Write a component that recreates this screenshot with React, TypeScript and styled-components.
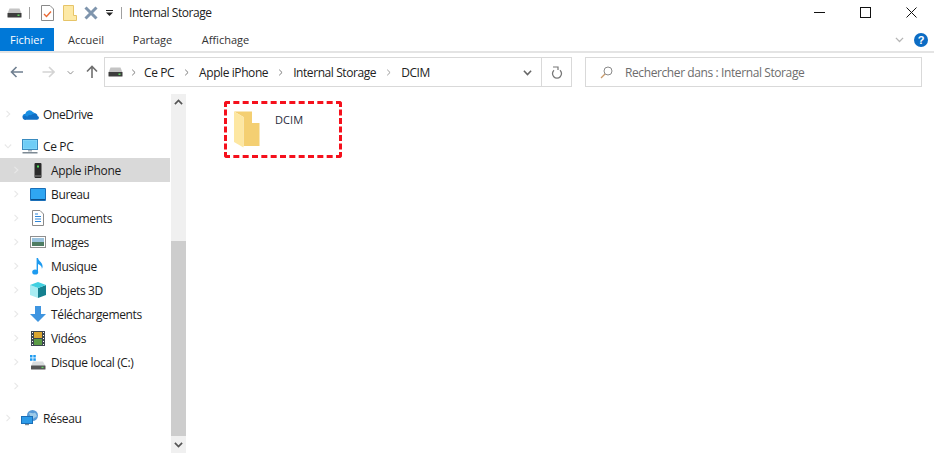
import React from 'react';
import styled, { createGlobalStyle } from 'styled-components';

const GlobalStyle = createGlobalStyle`
  html, body {
    margin: 0;
    padding: 0;
    background: #fff;
  }
  body {
    font-family: "Open Sans", "Noto Sans", "Liberation Sans", sans-serif;
    font-size: 12px;
    color: #1a1a1a;
  }
`;

const Window = styled.div`
  width: 934px;
  height: 453px;
  overflow: hidden;
  display: flex;
  flex-direction: column;
`;

const TitleBar = styled.div`
  height: 25px;
  display: flex;
  align-items: center;
  padding-left: 7px;
  flex: none;
`;

const QuickSep = styled.div<{ $left: number; $right: number }>`
  width: 1px;
  height: 12px;
  background: #a0a0a0;
  margin: 0 ${(p) => p.$right}px 0 ${(p) => p.$left}px;
`;

const Gap = styled.span<{ $w: number }>`
  width: ${(p) => p.$w}px;
  flex: none;
`;

const Title = styled.div`
  margin-left: 7px;
  font-size: 12px;
  letter-spacing: -0.45px;
  color: #222;
  flex: 1;
`;

const WinButton = styled.div`
  width: 46px;
  height: 25px;
  display: flex;
  align-items: center;
  justify-content: center;
`;

const WinButtons = styled.div`
  display: flex;
`;

const Ribbon = styled.div`
  height: 23px;
  margin-top: 3px;
  border-bottom: 2px solid #e4e4e4;
  display: flex;
  align-items: stretch;
  flex: none;
`;

const FileTab = styled.div`
  width: 54px;
  background: #0078d7;
  color: #fff;
  font-size: 11px;
  display: flex;
  align-items: center;
  justify-content: center;
`;

const RibbonTab = styled.div<{ $width: number }>`
  width: ${(p) => p.$width}px;
  font-size: 11px;
  color: #333;
  display: flex;
  align-items: center;
  justify-content: center;
`;

const RibbonRight = styled.div`
  margin-left: auto;
  display: flex;
  align-items: center;
  gap: 10px;
  padding-right: 6px;
`;

const HelpBadge = styled.div`
  width: 14px;
  height: 14px;
  border-radius: 50%;
  background: #0c6cc4;
  color: #fff;
  font-family: "Liberation Sans", sans-serif;
  font-weight: 700;
  font-size: 11px;
  line-height: 14px;
  text-align: center;
`;

const AddressRow = styled.div`
  height: 30px;
  margin-top: 4px;
  display: flex;
  align-items: stretch;
  flex: none;
`;

const NavButtons = styled.div`
  width: 104px;
  flex: none;
  display: flex;
  align-items: center;
  padding-left: 10px;
  box-sizing: border-box;
`;

const AddressBox = styled.div`
  width: 468px;
  box-sizing: border-box;
  border: 1px solid #d9d9d9;
  display: flex;
  align-items: center;
  padding-left: 3px;
`;

const Crumb = styled.span`
  font-size: 12px;
  letter-spacing: -0.42px;
  color: #222;
`;

const CrumbChevron = styled.div<{ $w: number }>`
  width: ${(p) => p.$w}px;
  display: flex;
  justify-content: center;
  flex: none;
`;

const AddressEnd = styled.div`
  margin-left: auto;
  display: flex;
  align-items: center;
  height: 100%;
`;

const DropCell = styled.div`
  width: 28px;
  height: 100%;
  display: flex;
  align-items: center;
  justify-content: center;
`;

const RefreshCell = styled.div`
  width: 29px;
  height: 100%;
  border-left: 1px solid #d9d9d9;
  display: flex;
  align-items: center;
  justify-content: center;
`;

const SearchBox = styled.div`
  width: 337px;
  margin-left: 13px;
  box-sizing: border-box;
  border: 1px solid #d9d9d9;
  display: flex;
  align-items: center;
  padding-left: 14px;
  gap: 12px;
  color: #6d6d6d;
  font-size: 12px;
  letter-spacing: -0.4px;
`;

const Body = styled.div`
  flex: 1;
  min-height: 0;
  display: flex;
  margin-top: 7px;
  position: relative;
`;

const Tree = styled.div`
  width: 170px;
  flex: none;
  padding-top: 8px;
`;

const TreeRow = styled.div<{ $level: number; $active?: boolean; $top?: number }>`
  height: 24px;
  margin-top: ${(p) => p.$top ?? 0}px;
  display: flex;
  align-items: center;
  padding-left: ${(p) => (p.$level === 0 ? 2 : 10)}px;
  background: ${(p) => (p.$active ? '#d9d9d9' : 'transparent')};
  font-size: 12px;
  letter-spacing: -0.36px;
  color: #1c1c1c;
`;

const Expander = styled.div`
  width: 12px;
  height: 12px;
  flex: none;
  display: flex;
  align-items: center;
  justify-content: center;
`;

const TreeIcon = styled.div`
  width: 18px;
  height: 18px;
  margin: 0 4px 0 7px;
  flex: none;
  display: flex;
  align-items: center;
  justify-content: center;
`;

const Scrollbar = styled.div`
  width: 15px;
  margin-left: 1px;
  background: #f0f0f0;
  flex: none;
  display: flex;
  flex-direction: column;
`;

const ScrollArrow = styled.div`
  height: 17px;
  flex: none;
  display: flex;
  align-items: center;
  justify-content: center;
`;

const ScrollSpace = styled.div`
  height: 130px;
  flex: none;
`;

const ScrollThumb = styled.div`
  flex: 1;
  background: #cdcdcd;
`;

const Content = styled.div`
  flex: 1;
  padding: 17px 0 0 48px;
`;

const FolderItem = styled.div`
  display: flex;
  align-items: flex-start;
  gap: 15px;
`;

const FolderName = styled.div`
  font-size: 11px;
  letter-spacing: 0.1px;
  color: #1f2a3a;
  margin-top: 1px;
`;

const Highlight = styled.div`
  position: absolute;
  left: 224px;
  top: 7px;
  width: 118px;
  height: 57px;
  box-sizing: border-box;
  border: 3px dashed #f5101c;
  border-radius: 3px;
`;

const DriveIcon = () => (
  <svg width="15" height="10" viewBox="0 0 15 10">
    <path d="M2.5 0.5h10L14.5 5.5H0.5z" fill="#c4c4c4" />
    <rect x="0.5" y="5" width="14" height="4.5" rx="0.5" fill="#3d3d3d" />
    <rect x="10.5" y="6.5" width="2" height="1.5" fill="#5fd35f" />
  </svg>
);

type ChevDir = 'right' | 'down' | 'up';

const chevPaths: Record<ChevDir, string> = {
  right: 'M2.5 0.8L5.8 4 2.5 7.2',
  down: 'M0.8 2.5L4 5.8 7.2 2.5',
  up: 'M0.8 5.5L4 2.2 7.2 5.5',
};

const Chev = ({ dir = 'right', color = '#e8e8e8', size = 8, weight = 1.1 }: { dir?: ChevDir; color?: string; size?: number; weight?: number }) => (
  <svg width={size} height={size} viewBox="0 0 8 8" fill="none">
    <path d={chevPaths[dir]} stroke={color} strokeWidth={weight} />
  </svg>
);

const Arrow = ({ color, dir }: { color: string; dir: 'left' | 'right' | 'up' }) => {
  const paths = {
    left: 'M1.5 7H13M6.5 2L1.5 7l5 5',
    right: 'M13 7H1.5M8 2l5 5-5 5',
    up: 'M7 13V1.5M2 6.5l5-5 5 5',
  };
  return (
    <svg width="14" height="14" viewBox="0 0 14 14" fill="none">
      <path d={paths[dir]} stroke={color} strokeWidth={1.6} />
    </svg>
  );
};

const OneDriveIcon = () => (
  <svg width="17" height="11" viewBox="0 0 17 11">
    <path d="M4 10.8h11a2 2 0 0 0 .6-3.9A3.2 3.2 0 0 0 11 4.4 3.8 3.8 0 0 0 5 5.5 2.8 2.8 0 0 0 .5 8 2.8 2.8 0 0 0 4 10.8z" fill="#0f6fc6" />
    <path d="M3.3 5A4.2 4.2 0 0 1 10.8 3 3.3 3.3 0 0 1 13.2 5 3.6 3.6 0 0 0 9 6.3 2.7 2.7 0 0 0 5.2 8 3 3 0 0 0 .8 7.4 2.8 2.8 0 0 1 3.3 5z" fill="#1a8fe3" />
  </svg>
);

const PcIcon = () => (
  <svg width="16" height="15" viewBox="0 0 16 15">
    <rect x="0.5" y="0.5" width="15" height="10" fill="#8fdcfb" stroke="#3a8bbf" />
    <rect x="1.5" y="1.5" width="13" height="8" fill="#6fcdf6" />
    <rect x="6" y="11" width="4" height="1.5" fill="#aab4bc" />
    <rect x="0.5" y="13" width="15" height="1.5" fill="#7d8a94" />
  </svg>
);

const PhoneIcon = () => (
  <svg width="8" height="15" viewBox="0 0 8 15">
    <rect x="0.5" y="0" width="7" height="15" rx="1" fill="#2b2b2b" />
    <rect x="1" y="12.5" width="6" height="1" fill="#8a8a8a" />
    <rect x="3" y="2.5" width="2" height="2" fill="#4fe05a" />
  </svg>
);

const DesktopIcon = () => (
  <svg width="16" height="13" viewBox="0 0 16 13">
    <rect x="0" y="0" width="16" height="13" rx="1" fill="#1a6fb8" />
    <rect x="1" y="1" width="14" height="10" fill="#2fa6f2" />
    <rect x="1" y="11" width="14" height="1" fill="#0c4f8a" />
  </svg>
);

const DocIcon = () => (
  <svg width="12" height="16" viewBox="0 0 12 16">
    <path d="M0.5 0.5H8L11.5 4V15.5H0.5z" fill="#fff" stroke="#8a8a8a" />
    <path d="M3 4h3M3 6.5h6M3 9h6M3 11.5h6" stroke="#2f86d8" strokeWidth="1" />
  </svg>
);

const ImagesIcon = () => (
  <svg width="16" height="12" viewBox="0 0 16 12">
    <rect x="0.5" y="0.5" width="15" height="11" fill="#fff" stroke="#8f8f8f" />
    <rect x="2" y="2" width="12" height="4" fill="#9cc3de" />
    <rect x="2" y="6" width="12" height="4" fill="#4e7d63" />
  </svg>
);

const MusicIcon = () => (
  <svg width="12" height="17" viewBox="0 0 12 17">
    <ellipse cx="3.2" cy="14" rx="3" ry="2.6" fill="#1e9bf0" />
    <path d="M4.6 14V0h1.4c.4 3 4.6 4.4 4.6 8.4 0 1-.3 1.8-.7 2.4.1-2.6-2-4-3.9-4.8V14z" fill="#1e9bf0" />
  </svg>
);

const CubeIcon = () => (
  <svg width="16" height="16" viewBox="0 0 16 16">
    <path d="M0 3l8 3v10l-8-3z" fill="#a8ecf2" />
    <path d="M8 6l8-3v10l-8 3z" fill="#15808f" />
    <path d="M8 0l8 3-8 3-8-3z" fill="#3fd0e0" />
  </svg>
);

const DownloadIcon = () => (
  <svg width="16" height="16" viewBox="0 0 16 16">
    <path d="M5 0h6v8h5l-8 8-8-8h5z" fill="#3f95e0" />
  </svg>
);

const VideoIcon = () => (
  <svg width="14" height="15" viewBox="0 0 14 15">
    <rect width="14" height="15" fill="#3d4650" />
    <rect x="3" y="1" width="8" height="6" fill="#d9a531" />
    <rect x="3" y="8" width="8" height="6" fill="#5b9b46" />
    <path d="M1 1.5h1M1 4.5h1M1 7.5h1M1 10.5h1M1 13.5h1M12 1.5h1M12 4.5h1M12 7.5h1M12 10.5h1M12 13.5h1" stroke="#fff" strokeWidth="1" />
  </svg>
);

const LocalDiskIcon = () => (
  <svg width="16" height="15" viewBox="0 0 16 15">
    <rect x="0" y="0" width="2.5" height="2.5" fill="#1e9bf0" />
    <rect x="3.3" y="0" width="2.5" height="2.5" fill="#1e9bf0" />
    <rect x="0" y="3.3" width="2.5" height="2.5" fill="#1e9bf0" />
    <rect x="3.3" y="3.3" width="2.5" height="2.5" fill="#1e9bf0" />
    <path d="M3 6.5h10L15.5 11H1z" fill="#d9dcde" />
    <rect x="1" y="10.5" width="14.5" height="4" rx="0.5" fill="#555" />
    <rect x="11.5" y="11.8" width="2" height="1.3" fill="#63d463" />
  </svg>
);

const NetworkIcon = () => (
  <svg width="18" height="16" viewBox="0 0 18 16">
    <circle cx="11.5" cy="5.5" r="5.5" fill="#5a9bd6" />
    <path d="M8 3c2-1 3 1 5 0s2 2 3 3c-1 2-3 1-4 3-2-1-3-3-4-6z" fill="#9ecbe8" />
    <rect x="0.5" y="6.5" width="11" height="7" fill="#2d9be8" stroke="#1a6fb8" />
    <rect x="4" y="14" width="4" height="1.2" fill="#7d8a94" />
  </svg>
);

const FolderIcon = () => (
  <svg width="26" height="37" viewBox="0 0 26 37">
    <path d="M0 0.5h18V12h7.5v23H9.5V6z" fill="#f4cf72" />
    <path d="M0 0.5L9.5 6v30.5L0 31z" fill="#fde7a2" />
  </svg>
);

const treeItems: { label: string; icon: React.ReactNode }[] = [
  { label: 'Bureau', icon: <DesktopIcon /> },
  { label: 'Documents', icon: <DocIcon /> },
  { label: 'Images', icon: <ImagesIcon /> },
  { label: 'Musique', icon: <MusicIcon /> },
  { label: 'Objets 3D', icon: <CubeIcon /> },
  { label: 'Téléchargements', icon: <DownloadIcon /> },
  { label: 'Vidéos', icon: <VideoIcon /> },
  { label: 'Disque local (C:)', icon: <LocalDiskIcon /> },
];

const App: React.FC = () => (
  <Window>
    <GlobalStyle />
    <TitleBar>
      <DriveIcon />
      <QuickSep $left={7} $right={11} />
      <svg width="13" height="16" viewBox="0 0 13 16" fill="none">
        <path d="M0.5 0.5H9L12.5 4V15.5H0.5z" fill="#fff" stroke="#8a8a8a" />
        <path d="M3 9l2.5 2.5L10 6.5" stroke="#ea6a35" strokeWidth="1.4" />
      </svg>
      <Gap $w={9} />
      <svg width="14" height="16" viewBox="0 0 14 16">
        <path d="M0.5 0.5h10v10h3v5H0.5z" fill="#fde9a6" stroke="#e6c468" />
      </svg>
      <Gap $w={7} />
      <svg width="14" height="14" viewBox="0 0 14 14" fill="none">
        <path d="M1.5 1.5l11 11M12.5 1.5l-11 11" stroke="#7f95ad" strokeWidth="3" />
      </svg>
      <Gap $w={8} />
      <svg width="7" height="6" viewBox="0 0 7 6">
        <rect x="0" y="0" width="7" height="1" fill="#222" />
        <path d="M0 2.5h7L3.5 6z" fill="#222" />
      </svg>
      <QuickSep $left={8} $right={0} />
      <Title>Internal Storage</Title>
      <WinButtons>
        <WinButton>
          <svg width="11" height="1" viewBox="0 0 11 1">
            <rect width="11" height="1" fill="#111" />
          </svg>
        </WinButton>
        <WinButton>
          <svg width="11" height="11" viewBox="0 0 11 11" fill="none">
            <rect x="0.5" y="0.5" width="10" height="10" stroke="#111" />
          </svg>
        </WinButton>
        <WinButton>
          <svg width="11" height="11" viewBox="0 0 11 11" fill="none">
            <path d="M0.5 0.5l10 10M10.5 0.5l-10 10" stroke="#111" />
          </svg>
        </WinButton>
      </WinButtons>
    </TitleBar>
    <Ribbon>
      <FileTab>Fichier</FileTab>
      <RibbonTab $width={64}>Accueil</RibbonTab>
      <RibbonTab $width={69}>Partage</RibbonTab>
      <RibbonTab $width={77}>Affichage</RibbonTab>
      <RibbonRight>
        <Chev dir="down" color="#b5b5b5" size={9} />
        <HelpBadge>?</HelpBadge>
      </RibbonRight>
    </Ribbon>
    <AddressRow>
      <NavButtons>
        <Arrow dir="left" color="#6f7f90" />
        <Gap $w={17} />
        <Arrow dir="right" color="#d4d4d4" />
        <Gap $w={12} />
        <Chev dir="down" color="#8a8a8a" size={7} />
        <Gap $w={11} />
        <Arrow dir="up" color="#6f6f6f" />
      </NavButtons>
      <AddressBox>
        <DriveIcon />
        <CrumbChevron $w={21}><Chev color="#777" size={7} /></CrumbChevron>
        <Crumb>Ce PC</Crumb>
        <CrumbChevron $w={25}><Chev color="#777" size={7} /></CrumbChevron>
        <Crumb>Apple iPhone</Crumb>
        <CrumbChevron $w={25}><Chev color="#777" size={7} /></CrumbChevron>
        <Crumb>Internal Storage</Crumb>
        <CrumbChevron $w={25}><Chev color="#999" size={7} /></CrumbChevron>
        <Crumb>DCIM</Crumb>
        <AddressEnd>
          <DropCell><Chev dir="down" color="#666" size={9} weight={1.4} /></DropCell>
          <RefreshCell>
            <svg width="12" height="13" viewBox="0 0 12 13" fill="none">
              <path d="M3 4.2A4.5 4.5 0 1 0 9 4.2" stroke="#777" strokeWidth="1.3" />
              <path d="M2 1h5v3" stroke="#777" strokeWidth="1.2" />
            </svg>
          </RefreshCell>
        </AddressEnd>
      </AddressBox>
      <SearchBox>
        <svg width="13" height="13" viewBox="0 0 13 13" fill="none">
          <circle cx="8" cy="5" r="4" stroke="#8a8a8a" />
          <path d="M5 8l-4 4" stroke="#c89a6a" strokeWidth="1.2" />
        </svg>
        <span>Rechercher dans : Internal Storage</span>
      </SearchBox>
    </AddressRow>
    <Body>
      <Tree>
        <TreeRow $level={0}>
          <Expander><Chev /></Expander>
          <TreeIcon><OneDriveIcon /></TreeIcon>
          OneDrive
        </TreeRow>
        <TreeRow $level={0} $top={8}>
          <Expander><Chev dir="down" /></Expander>
          <TreeIcon><PcIcon /></TreeIcon>
          Ce PC
        </TreeRow>
        <TreeRow $level={1} $active>
          <Expander><Chev /></Expander>
          <TreeIcon><PhoneIcon /></TreeIcon>
          Apple iPhone
        </TreeRow>
        {treeItems.map((item) => (
          <TreeRow $level={1} key={item.label}>
            <Expander><Chev /></Expander>
            <TreeIcon>{item.icon}</TreeIcon>
            {item.label}
          </TreeRow>
        ))}
        <TreeRow $level={1}>
          <Expander><Chev /></Expander>
        </TreeRow>
        <TreeRow $level={0} $top={8}>
          <Expander><Chev /></Expander>
          <TreeIcon><NetworkIcon /></TreeIcon>
          Réseau
        </TreeRow>
      </Tree>
      <Scrollbar>
        <ScrollArrow><Chev dir="up" color="#555" size={9} weight={1.5} /></ScrollArrow>
        <ScrollSpace />
        <ScrollThumb />
        <ScrollArrow><Chev dir="down" color="#555" size={9} weight={1.5} /></ScrollArrow>
      </Scrollbar>
      <Content>
        <FolderItem>
          <FolderIcon />
          <FolderName>DCIM</FolderName>
        </FolderItem>
      </Content>
      <Highlight />
    </Body>
  </Window>
);

export default App;
